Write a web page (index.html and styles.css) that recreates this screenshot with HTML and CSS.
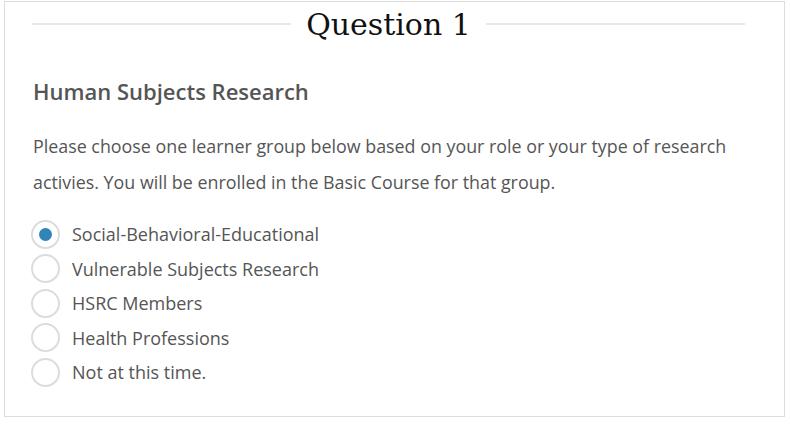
FILE: index.html
```html
<!doctype html>
<html lang="en">
  <head>
    <meta charset="UTF-8" />
    <title>Question 1</title>
    <link rel="stylesheet" href="styles.css">
  </head>
  <body>
    <div class="card">
      <h1 class="title">Question 1</h1>
      <h2>Human Subjects Research</h2>
      <p>Please choose one learner group below based on your role or your type of research activies. You will be enrolled in the Basic Course for that group.</p>
      <form class="options">
        <label class="option"><input type="radio" name="grupo" checked /> Social-Behavioral-Educational</label>
        <label class="option"><input type="radio" name="grupo" /> Vulnerable Subjects Research</label>
        <label class="option"><input type="radio" name="grupo" /> HSRC Members</label>
        <label class="option"><input type="radio" name="grupo" /> Health Professions</label>
        <label class="option"><input type="radio" name="grupo" /> Not at this time.</label>
      </form>
    </div>
  </body>
</html>
```

FILE: styles.css
```css
body {
  margin: 0;
  background: white;
  font-family: "Open Sans", Arial, sans-serif;
  color: #555;
}
.card {
  box-sizing: border-box;
  margin: 1px 5px 0 4px;
  height: 416px;
  border: 1px solid #ddd;
  padding: 0 39px 0 27px;
}
.title {
  display: flex;
  align-items: center;
  gap: 15px;
  margin: 0;
  height: 44px;
  font-family: "DejaVu Serif", "Liberation Serif", serif;
  font-weight: normal;
  font-size: 30px;
  color: #111;
}
.title::before,
.title::after {
  content: "";
  flex: 1;
  height: 2px;
  background: #e8e8e8;
}
h2 {
  margin: 30px 0 0 1px;
  font-size: 22px;
  line-height: 30px;
  font-weight: 600;
  color: #555;
}
p {
  margin: 22px 0 0 1px;
  font-size: 17.85px;
  line-height: 36px;
}
.options {
  margin-top: 17px;
}
.option {
  display: flex;
  align-items: center;
  height: 34.5px;
  font-size: 18px;
}
.option input {
  appearance: none;
  box-sizing: border-box;
  width: 29px;
  height: 29px;
  margin: 0 12px 0 -1px;
  border: 2px solid #dcdcdc;
  border-radius: 50%;
  background: white;
  display: flex;
  align-items: center;
  justify-content: center;
}
.option input:checked::after {
  content: "";
  width: 13px;
  height: 13px;
  border-radius: 50%;
  background: #2f84b8;
}
```
